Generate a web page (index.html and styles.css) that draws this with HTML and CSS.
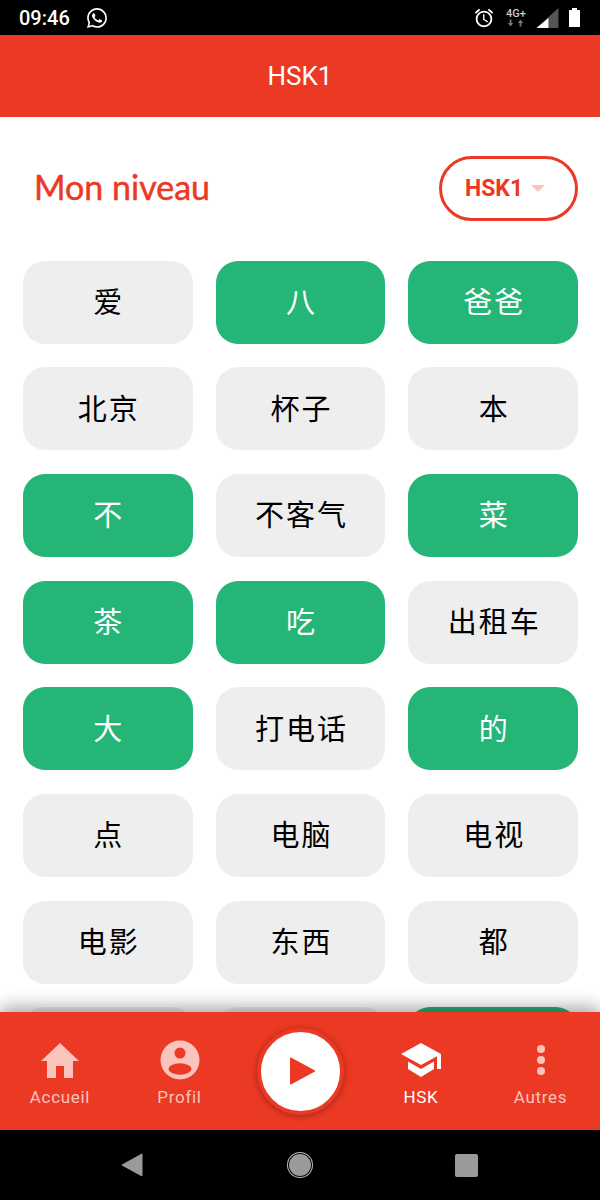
FILE: index.html
```html
<!DOCTYPE html>
<html>

<head>
    <title>HSK1</title>
    <meta charset="utf-8">
    <link rel="stylesheet" href="styles.css">
</head>

<body>
    <div class="app">
        <!-- status bar -->
        <div class="status-bar">
            <span class="time">09:46</span>
            <svg class="whatsapp" viewBox="0 0 24 24">
                <path fill="#fff" d="M12.04 2C6.58 2 2.13 6.45 2.13 11.91c0 1.75.46 3.45 1.32 4.95L2.05 22l5.25-1.38c1.45.79 3.08 1.21 4.74 1.21 5.46 0 9.91-4.45 9.91-9.91S17.5 2 12.04 2zm0 18.15c-1.48 0-2.93-.4-4.2-1.15l-.3-.18-3.12.82.83-3.04-.2-.31a8.2 8.2 0 0 1-1.26-4.38c0-4.54 3.7-8.24 8.24-8.24s8.24 3.7 8.24 8.24-3.69 8.24-8.23 8.24zm4.52-6.16c-.25-.12-1.47-.72-1.69-.81-.23-.08-.39-.12-.56.12-.17.25-.64.81-.78.97-.14.17-.29.19-.54.06-.25-.12-1.05-.39-1.99-1.23-.74-.66-1.23-1.47-1.38-1.72-.14-.25-.02-.38.11-.51.11-.11.25-.29.37-.43.12-.14.17-.25.25-.41.08-.17.04-.31-.02-.43-.06-.12-.56-1.34-.76-1.84-.2-.48-.41-.42-.56-.43h-.48c-.17 0-.43.06-.66.31-.22.25-.86.85-.86 2.07s.89 2.4 1.01 2.56c.12.17 1.75 2.67 4.23 3.74.59.26 1.05.41 1.41.52.59.19 1.13.16 1.56.1.48-.07 1.47-.6 1.67-1.18.21-.58.21-1.07.14-1.18-.06-.11-.22-.17-.47-.29z" />
            </svg>
            <div class="status-right">
                <svg class="alarm" viewBox="0 0 24 24">
                    <path fill="#fff" d="M22 5.72l-4.6-3.86-1.29 1.53 4.6 3.86L22 5.72zM7.88 3.39L6.6 1.86 2 5.71l1.29 1.53 4.59-3.85zM12.5 8H11v6l4.75 2.85.75-1.23-4-2.37V8zM12 4c-4.97 0-9 4.03-9 9s4.03 9 9 9 9-4.03 9-9-4.03-9-9-9zm0 16c-3.87 0-7-3.13-7-7s3.13-7 7-7 7 3.13 7 7-3.13 7-7 7z" />
                </svg>
                <div class="network">
                    <span class="network-label">4G+</span>
                    <svg class="network-arrows" viewBox="0 0 20 8">
                        <path fill="#777" d="M3 0h2v4h2L4 8 1 4h2zM15 0l3 4h-2v4h-2V4h-2z" />
                    </svg>
                </div>
                <svg class="signal" viewBox="0 0 24 22">
                    <path fill="#555" d="M24 0v22H0z" />
                    <path fill="#fff" d="M13 11v11H0z" />
                </svg>
                <svg class="battery" viewBox="0 0 11 19">
                    <path fill="#fff" d="M3 0h5v2h3v17H0V2h3z" />
                </svg>
            </div>
        </div>

        <div class="top-bar">HSK1</div>

        <div class="content">
            <div class="level-row">
                <span class="level-title">Mon niveau</span>
                <div class="level-select">
                    <span>HSK1</span>
                    <span class="caret"></span>
                </div>
            </div>

            <div class="word-grid">
                <div class="word">爱</div>
                <div class="word done">八</div>
                <div class="word done">爸爸</div>
                <div class="word">北京</div>
                <div class="word">杯子</div>
                <div class="word">本</div>
                <div class="word done">不</div>
                <div class="word">不客气</div>
                <div class="word done">菜</div>
                <div class="word done">茶</div>
                <div class="word done">吃</div>
                <div class="word">出租车</div>
                <div class="word done">大</div>
                <div class="word">打电话</div>
                <div class="word done">的</div>
                <div class="word">点</div>
                <div class="word">电脑</div>
                <div class="word">电视</div>
                <div class="word">电影</div>
                <div class="word">东西</div>
                <div class="word">都</div>
                <!-- last row is under the tabs, only the top edge shows -->
                <div class="word"></div>
                <div class="word"></div>
                <div class="word done"></div>
            </div>
        </div>

        <!-- bottom tabs -->
        <div class="tab-bar">
            <div class="tab">
                <svg class="tab-icon" viewBox="0 0 40 40">
                    <path fill="#fac3bb" d="M20 3L1 21h6v17h9V26h8v12h9V21h6z" />
                </svg>
                <span>Accueil</span>
            </div>
            <div class="tab">
                <svg class="tab-icon" viewBox="0 0 40 40">
                    <circle cx="20" cy="20" r="19.5" fill="#fac3bb" />
                    <circle cx="20" cy="13" r="5.5" fill="#eb3923" />
                    <ellipse cx="20" cy="29" rx="11.5" ry="5.8" fill="#eb3923" />
                </svg>
                <span>Profil</span>
            </div>
            <div class="tab-play">
                <div class="play-button">
                    <svg class="play-icon" viewBox="0 0 26 28">
                        <path fill="#eb3923" stroke="#eb3923" stroke-width="2" stroke-linejoin="round" d="M1 1l24 13L1 27z" />
                    </svg>
                </div>
            </div>
            <div class="tab active">
                <svg class="tab-icon" viewBox="0 0 40 40">
                    <path fill="#fff" d="M20 3L0 14l20 11 16-8.8V29h4V14zM7 21.5v7.5l13 8 13-8v-7.5L20 29z" />
                </svg>
                <span>HSK</span>
            </div>
            <div class="tab">
                <svg class="tab-icon" viewBox="0 0 40 40">
                    <circle cx="20" cy="9" r="4" fill="#fac3bb" />
                    <circle cx="20" cy="20" r="4" fill="#fac3bb" />
                    <circle cx="20" cy="31" r="4" fill="#fac3bb" />
                </svg>
                <span>Autres</span>
            </div>
        </div>

        <!-- android nav -->
        <div class="nav-bar">
            <svg class="nav-back" viewBox="0 0 22 24">
                <path fill="#9a9a9a" stroke="#9a9a9a" stroke-linejoin="round" d="M21 1v22L1 12z" />
            </svg>
            <div class="nav-home"></div>
            <div class="nav-square"></div>
        </div>
    </div>
</body>

</html>
```

FILE: styles.css
```css
html,
body {
    margin: 0;
    height: 100%;
}

body {
    font-family: Roboto, "Noto Sans CJK SC", sans-serif;
    background: #fff;
}

.app {
    display: flex;
    flex-direction: column;
    height: 1200px;
    overflow: hidden;
}

/* status bar */
.status-bar {
    display: flex;
    align-items: center;
    height: 35px;
    padding: 0 20px 0 19px;
    box-sizing: border-box;
    background: #000;
    color: #fff;
    flex-shrink: 0;
}

.time {
    font-size: 20px;
    font-weight: 500;
}

.whatsapp {
    width: 24px;
    height: 24px;
    margin-left: 15px;
}

.status-right {
    display: flex;
    align-items: center;
    margin-left: auto;
}

.alarm {
    width: 22px;
    height: 22px;
}

.network {
    display: flex;
    flex-direction: column;
    align-items: center;
    width: 20px;
    margin-left: 11px;
}

.network-label {
    font-size: 11px;
    line-height: 11px;
    font-weight: 500;
    color: #ccc;
}

.network-arrows {
    width: 18px;
    height: 8px;
}

.signal {
    width: 23px;
    height: 20px;
    margin-left: 10px;
}

.battery {
    width: 11px;
    height: 19px;
    margin-left: 10px;
}

/* header */
.top-bar {
    display: flex;
    align-items: center;
    justify-content: center;
    height: 82px;
    background: #eb3923;
    color: #fff;
    font-size: 26px;
    flex-shrink: 0;
}

.content {
    flex: 1;
    min-height: 0;
    overflow: hidden;
    padding: 39px 22px 0 23px;
}

.level-row {
    display: flex;
    align-items: center;
    justify-content: space-between;
    height: 65px;
    margin-bottom: 39.67px;
}

.level-title {
    margin-left: 11px;
    padding-bottom: 4px;
    font-family: Lato, sans-serif;
    font-size: 34px;
    color: #eb3923;
    -webkit-text-stroke: 0.5px #eb3923;
}

.level-select {
    display: flex;
    align-items: center;
    justify-content: center;
    gap: 8px;
    width: 139px;
    height: 65px;
    padding-right: 7px;
    box-sizing: border-box;
    border: 3px solid #eb3923;
    border-radius: 33px;
    color: #eb3923;
    font-size: 23px;
    font-weight: 700;
}

.caret {
    width: 0;
    height: 0;
    border-left: 7px solid transparent;
    border-right: 7px solid transparent;
    border-top: 7px solid #fac3bb;
}

.word-grid {
    display: grid;
    grid-template-columns: 1fr 1fr 1fr;
    grid-auto-rows: 83px;
    column-gap: 23px;
    row-gap: 23.67px;
}

.word {
    display: flex;
    align-items: center;
    justify-content: center;
    padding: 0 0 4px 2px;
    border-radius: 22px;
    background: #eeeeee;
    color: #000;
    font-family: "Noto Sans CJK SC", sans-serif;
    font-size: 29px;
    letter-spacing: 2px;
}

.word.done {
    background: #25b576;
    color: #fff;
}

/* bottom tabs */
.tab-bar {
    position: relative;
    display: grid;
    grid-template-columns: 120px 119px 122px 120px 119px;
    height: 118px;
    background: #eb3923;
    box-shadow: 0 -5px 16px rgba(0, 0, 0, 0.35);
    flex-shrink: 0;
}

.tab {
    display: flex;
    flex-direction: column;
    align-items: center;
    padding-top: 28px;
    color: #fac3bb;
    font-size: 17px;
    line-height: 20px;
    letter-spacing: 0.7px;
}

.tab.active {
    color: #fff;
}

.tab-icon {
    width: 40px;
    height: 40px;
    margin-bottom: 7px;
}

.tab-play {
    display: flex;
    align-items: center;
    justify-content: center;
}

.play-button {
    display: flex;
    align-items: center;
    justify-content: center;
    width: 87px;
    height: 87px;
    box-sizing: border-box;
    border: 4px solid #eb3923;
    border-radius: 50%;
    background: #fff;
    box-shadow: 0 1px 6px rgba(0, 0, 0, 0.35);
}

.play-icon {
    width: 25px;
    height: 28px;
    margin-left: 5px;
}

/* android nav */
.nav-bar {
    display: grid;
    grid-template-columns: 1fr 1fr 1fr;
    align-items: center;
    justify-items: center;
    height: 70px;
    background: #000;
    flex-shrink: 0;
}

.nav-back {
    width: 22px;
    height: 24px;
    margin-left: 63px;
}

.nav-home {
    width: 22px;
    height: 22px;
    border-radius: 50%;
    background: #9a9a9a;
    box-shadow: 0 0 0 1px #000, 0 0 0 2px #bbb;
}

.nav-square {
    width: 23px;
    height: 23px;
    margin-right: 67px;
    border-radius: 2px;
    background: #9a9a9a;
}
```
